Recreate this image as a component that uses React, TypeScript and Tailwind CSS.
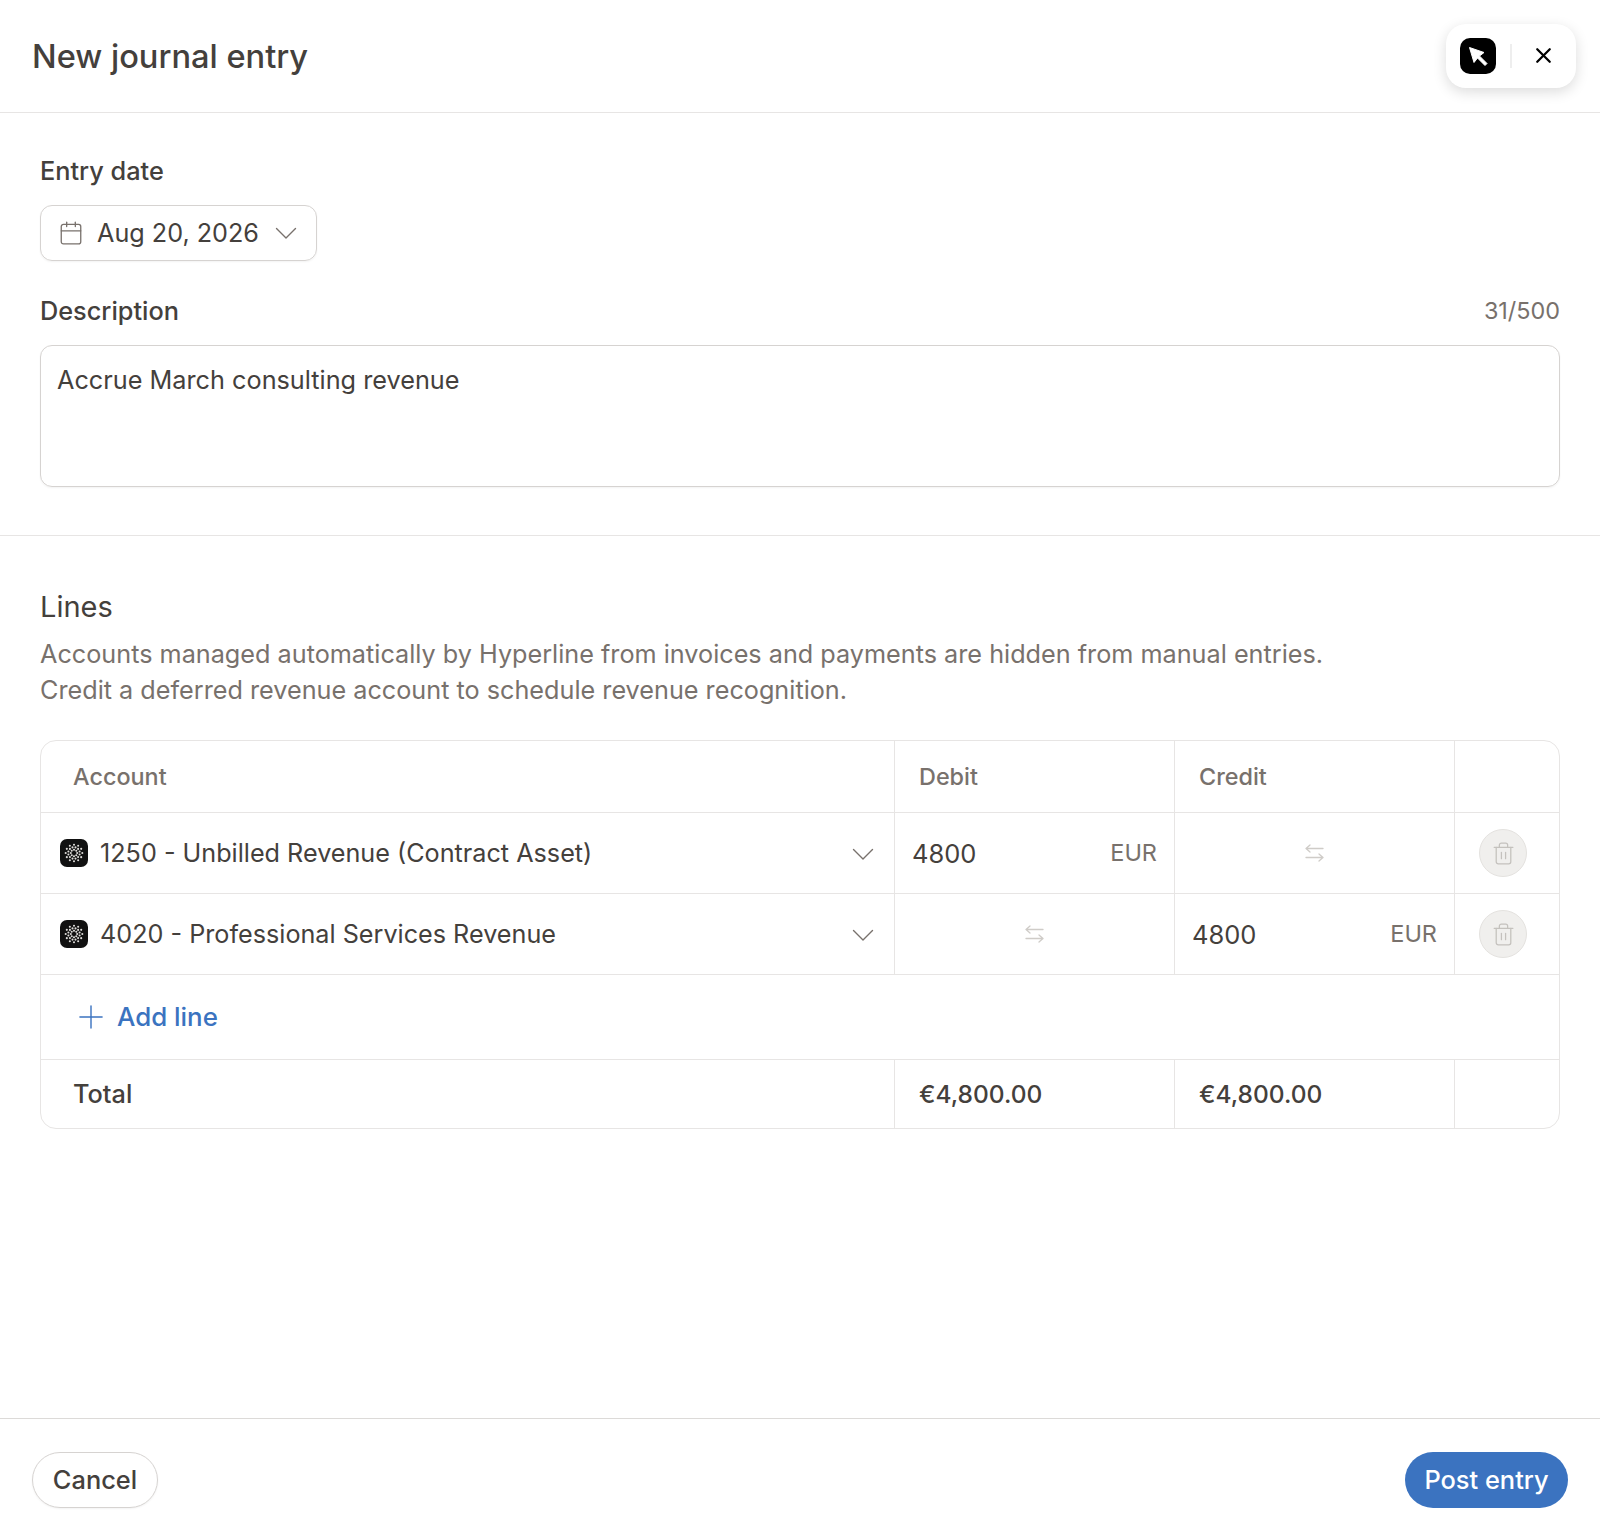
import React from "react";
import { Calendar, Plus, Trash2, X } from "lucide-react";

const font = { fontFamily: "Inter, 'Noto Sans', sans-serif" };

// little dotted rosette used as the account logo
function AccountLogo() {
    const rings = [
        { r: 3.2, n: 8, off: 0 },
        { r: 5.8, n: 12, off: 15 },
        { r: 8.3, n: 12, off: 0 },
    ];
    return (
        <svg width="28" height="28" viewBox="0 0 28 28" className="shrink-0">
            <rect width="28" height="28" rx="7" fill="#111111" />
            {rings.map((ring) =>
                Array.from({ length: ring.n }, (_, i) => {
                    const a = ((i * 360) / ring.n + ring.off) * (Math.PI / 180);
                    return (
                        <circle
                            key={`${ring.r}-${i}`}
                            cx={14 + ring.r * Math.cos(a)}
                            cy={14 + ring.r * Math.sin(a)}
                            r="1.05"
                            fill="#dddbd8"
                        />
                    );
                })
            )}
        </svg>
    );
}

function Chevron() {
    return (
        <svg width="22" height="13" viewBox="0 0 22 13" fill="none" stroke="#78716c" strokeWidth="1.4" strokeLinecap="round" strokeLinejoin="round" className="shrink-0">
            <path d="M1.500 1.500L11 11l9.500-9.500" />
        </svg>
    );
}

function SwapIcon() {
    return (
        <svg width="20" height="20" viewBox="0 0 20 20" fill="none" stroke="#cfccc8" strokeWidth="1.3" strokeLinecap="round" strokeLinejoin="round">
            <path d="M1 5.5h17M1 5.5l4-3.5M1 5.5l4 3.5" />
            <path d="M18 14.5H1M18 14.5l-4-3.5M18 14.5l-4 3.5" />
        </svg>
    );
}

function DeleteButton() {
    return (
        <div className="w-[48px] h-[48px] mr-[8px] rounded-full bg-[#f0efed] border border-[#e4e2df] flex items-center justify-center">
            <Trash2 size={25} strokeWidth={1.2} className="text-[#c4c1bd]" />
        </div>
    );
}

function Amount() {
    return (
        <div className="h-full flex items-center justify-between pl-[17px] pr-[17px]">
            <span className="pt-[2px] text-[25.5px] text-[#44403c]">4800</span>
            <span className="text-[23.5px] text-[#78716c]">EUR</span>
        </div>
    );
}

function Swap() {
    return (
        <div className="h-full flex items-center justify-center">
            <SwapIcon />
        </div>
    );
}

function AccountCell({ label }: { label: string }) {
    return (
        <div className="h-full flex items-center border-r border-[#e7e5e4] pl-[19px] pr-[20px]">
            <AccountLogo />
            <span className="ml-[12px] pt-[2px] flex-1 text-[25.2px] text-[#44403c]">{label}</span>
            <span className="pt-[2px]"><Chevron /></span>
        </div>
    );
}

export default function App() {
    return (
        <div className="min-h-[1540px] bg-white flex flex-col" style={font}>
            {/* Header */}
            <header className="h-[113px] shrink-0 px-[32px] flex items-center justify-between border-b border-[#e7e5e4]">
                <h1 className="text-[32.6px] font-[450] text-[#44403c]">New journal entry</h1>
                <div className="mr-[-8px] w-[130px] h-[64px] mb-[1px] bg-white rounded-[20px] shadow-[0_4px_14px_rgba(0,0,0,0.14)] flex items-center pl-[14px]">
                    <div className="w-[36px] h-[36px] rounded-[10px] bg-black flex items-center justify-center">
                        <svg width="36" height="36" viewBox="0 0 36 36">
                            <path d="M9.5 9.5L24 14.5l-4.5 3.5 7.5 7.5-2 2-7.500-7.500L14 24.500z" fill="white" stroke="white" strokeWidth="1" strokeLinejoin="round" />
                        </svg>
                    </div>
                    <div className="ml-[14px] w-[2px] h-[24px] bg-[#eeeeee]" />
                    <X size={25} strokeWidth={2.2} className="ml-[19px] text-black" />
                </div>
            </header>

            {/* Entry fields */}
            <section className="h-[423px] shrink-0 px-[40px] pt-[42px] border-b border-[#e7e5e4]">
                <div className="text-[25.3px] font-[450] leading-[32px] text-[#44403c]">Entry date</div>
                <div className="mt-[18px] w-[277px] h-[56px] rounded-[12px] border border-[#d6d3d1] shadow-[0_1px_2px_rgba(0,0,0,0.05)] flex items-center pl-[17px]">
                    <Calendar size={26} strokeWidth={1.2} className="text-[#78716c]" />
                    <span className="ml-[13px] pt-[2px] text-[25.2px] text-[#44403c]">Aug 20, 2026</span>
                    <span className="ml-[16px]"><Chevron /></span>
                </div>
                <div className="mt-[34px] flex justify-between items-center h-[32px]">
                    <span className="text-[25.3px] font-[450] text-[#44403c]">Description</span>
                    <span className="text-[23.4px] text-[#78716c]">31/500</span>
                </div>
                <div className="mt-[18px] h-[142px] rounded-[12px] border border-[#d6d3d1] shadow-[0_1px_2px_rgba(0,0,0,0.05)] px-[16px] pt-[17px] text-[25.25px] leading-[34px] text-[#44403c]">
                    Accrue March consulting revenue
                </div>
            </section>

            {/* Lines */}
            <section className="flex-1 px-[40px] pt-[52px]">
                <h2 className="text-[29px] leading-[38px] text-[#44403c]">Lines</h2>
                <p className="mt-[10px] text-[25.22px] leading-[36px] text-[#78716c]">
                    Accounts managed automatically by Hyperline from invoices and payments are hidden from manual entries.
                    <br />
                    Credit a deferred revenue account to schedule revenue recognition.
                </p>

                <div className="mt-[32px] rounded-[16px] border border-[#e7e5e4] grid grid-cols-[854px_280px_280px_1fr]">
                    {/* head */}
                    <div className="h-[72px] flex items-center pl-[32px] border-r border-b border-[#e7e5e4] text-[23.4px] font-[450] text-[#78716c]">Account</div>
                    <div className="h-[72px] flex items-center pl-[24px] border-r border-b border-[#e7e5e4] text-[23.4px] font-[450] text-[#78716c]">Debit</div>
                    <div className="h-[72px] flex items-center pl-[24px] border-r border-b border-[#e7e5e4] text-[23.4px] font-[450] text-[#78716c]">Credit</div>
                    <div className="h-[72px] border-b border-[#e7e5e4]" />

                    {/* row 1 */}
                    <div className="h-[81px] border-b border-[#e7e5e4]"><AccountCell label="1250 - Unbilled Revenue (Contract Asset)" /></div>
                    <div className="h-[81px] border-r border-b border-[#e7e5e4]"><Amount /></div>
                    <div className="h-[81px] border-r border-b border-[#e7e5e4]"><Swap /></div>
                    <div className="h-[81px] border-b border-[#e7e5e4] flex items-center justify-center"><DeleteButton /></div>

                    {/* row 2 */}
                    <div className="h-[81px] border-b border-[#e7e5e4]"><AccountCell label="4020 - Professional Services Revenue" /></div>
                    <div className="h-[81px] border-r border-b border-[#e7e5e4]"><Swap /></div>
                    <div className="h-[81px] border-r border-b border-[#e7e5e4]"><Amount /></div>
                    <div className="h-[81px] border-b border-[#e7e5e4] flex items-center justify-center"><DeleteButton /></div>

                    {/* add line */}
                    <div className="col-span-4 h-[85px] border-b border-[#e7e5e4] flex items-center pl-[31px] text-[#3b73c0]">
                        <Plus size={38} strokeWidth={0.9} />
                        <span className="ml-[7px] text-[25.9px] font-[450]">Add line</span>
                    </div>

                    {/* total */}
                    <div className="h-[68px] flex items-center pl-[32px] border-r border-[#e7e5e4] text-[25.3px] font-[450] text-[#44403c]">Total</div>
                    <div className="h-[68px] flex items-center pl-[24px] pt-[1px] border-r border-[#e7e5e4] text-[24.5px] font-[450] text-[#44403c]">€4,800.00</div>
                    <div className="h-[68px] flex items-center pl-[24px] pt-[1px] border-r border-[#e7e5e4] text-[24.5px] font-[450] text-[#44403c]">€4,800.00</div>
                    <div className="h-[68px]" />
                </div>
            </section>

            {/* Footer */}
            <footer className="h-[122px] shrink-0 px-[32px] pt-[33px] border-t border-[#dcdad8] flex justify-between items-start">
                <button className="w-[126px] h-[56px] rounded-full border border-[#d6d3d1] shadow-[0_1px_2px_rgba(0,0,0,0.05)] text-[25.4px] font-[450] text-[#44403c]">Cancel</button>
                <button className="w-[163px] h-[56px] rounded-full bg-[#3b73c0] text-[25.4px] font-[450] text-white">Post entry</button>
            </footer>
        </div>
    );
}
